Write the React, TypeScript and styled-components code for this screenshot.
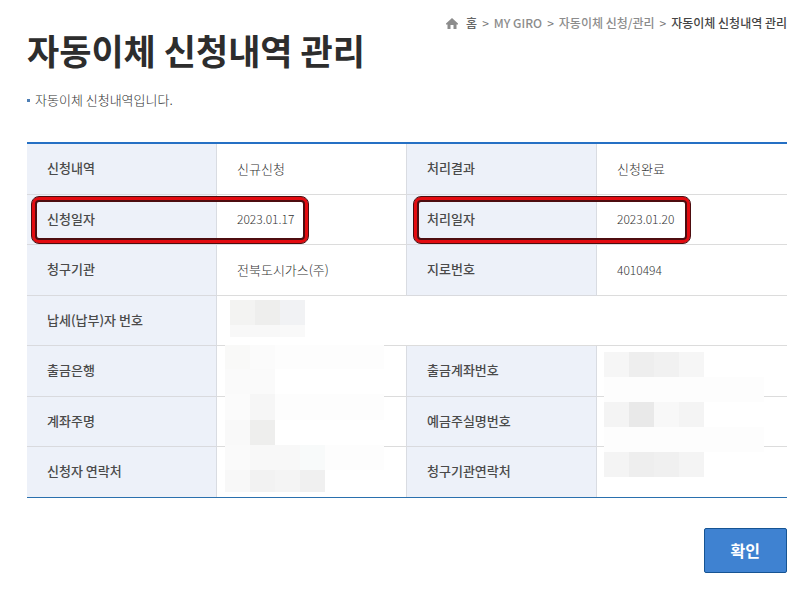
import React from "react";
import styled, { createGlobalStyle } from "styled-components";

const GlobalStyle = createGlobalStyle`
  * { box-sizing: border-box; }
  body {
    margin: 0;
    background: #fff;
    color: #333;
    font-family: "Noto Sans CJK KR", sans-serif;
    font-size: 13px;
    line-height: 20px;
  }
`;

const Page = styled.main`
  padding: 13px 13px 24px 27px;
`;

const Header = styled.header`
  display: flex;
  justify-content: space-between;
  align-items: flex-start;
`;

const Title = styled.h1`
  margin: 12px 0 0;
  color: #2d2d2d;
  font-size: 35px;
  font-weight: 700;
  line-height: 50px;
  white-space: nowrap;
`;

const Crumbs = styled.nav`
  display: flex;
  align-items: center;
  gap: 5px;
  color: #777;
  font-size: 12px;
  white-space: nowrap;
`;

const CrumbLink = styled.a<{ $home?: boolean }>`
  display: inline-flex;
  align-items: center;
  gap: 8px;
  color: ${(p) => (p.$home ? "#666" : "#8c8c8c")};
  font-weight: 500;
  text-decoration: none;
`;

const Current = styled.span`
  color: #444;
  font-weight: 500;
`;

const Intro = styled.p`
  display: flex;
  align-items: center;
  gap: 5px;
  margin: 15px 0 32px;
  font-weight: 300;
`;

const Bullet = styled.span`
  width: 3px;
  height: 3px;
  background: #4f7fb5;
`;

const Table = styled.table`
  width: 100%;
  table-layout: fixed;
  border-collapse: separate;
  border-spacing: 0;
  border-top: 2px solid #2570c4;
  border-bottom: 1px solid #2a70ae;
`;

const Row = styled.tr`
  height: 50px;
  &:nth-child(odd) { height: 51px; }
  &:last-child { height: 50px; }
  &:last-child > * { border-bottom: 0; }
`;

const Label = styled.th`
  position: relative;
  padding: 0 20px 2px;
  background: #edf1f9;
  border-right: 1px solid #d9dce2;
  border-bottom: 1px solid #d9dade;
  color: #4a4a4a;
  font-weight: 500;
  text-align: left;
`;

const Value = styled.td`
  position: relative;
  padding: 0 20px 1px;
  border-right: 1px solid #d9dce2;
  border-bottom: 1px solid #dcdcdc;
  font-weight: 300;
  &:last-child { border-right: 0; }
`;

const Digits = styled.span`
  font-size: 12px;
`;

const Highlight = styled.span<{ $left: number }>`
  position: absolute;
  z-index: 1;
  top: 1px;
  left: ${(p) => p.$left}px;
  width: 147%;
  height: 48px;
  border: 1px solid #4d0d10;
  border-radius: 8px;
  box-shadow: inset 0 0 0 3px #e30b10, inset 0 0 0 5px #4d0d10;
  pointer-events: none;
`;

const Mosaic = styled.span<{ $x: number; $y: number; $w: number }>`
  position: absolute;
  z-index: 1;
  top: ${(p) => p.$y}px;
  left: ${(p) => p.$x}px;
  width: ${(p) => p.$w}px;
  background: #fff;
`;

const TileRow = styled.span<{ $h: number; $rest: string }>`
  display: flex;
  height: ${(p) => p.$h}px;
  background: ${(p) => p.$rest};
`;

const Tile = styled.span<{ $tone: string }>`
  width: 25px;
  background: ${(p) => p.$tone};
`;

const Actions = styled.div`
  display: flex;
  justify-content: flex-end;
  margin-top: 30px;
`;

const Confirm = styled.button`
  padding: 9px 26px 10px;
  border: 1px solid #165493;
  border-radius: 2px;
  background: #3f82d1;
  color: #fff;
  font: 700 16px/24px "Noto Sans CJK KR", sans-serif;
  cursor: pointer;
`;

type Line = { h: number; tiles: string[]; rest?: string };

const payerTiles: Line[] = [
  { h: 25, tiles: ["#f3f3f2", "#eeeeed", "#f1f2f4"] },
  { h: 12, tiles: ["#f8f8f8", "#f8f8f8", "#f9f9f9"] },
];

const accountTiles: Line[] = [
  { h: 24, tiles: ["#f9f9f8", "#fbfbfb"], rest: "#fdfdfd" },
  { h: 25, tiles: ["#fafafa", "#fafafa"] },
  { h: 26, tiles: ["#fbfbfb", "#f6f6f6"], rest: "#fdfdfd" },
  { h: 25, tiles: ["#f9f9f9", "#eeeeed"] },
  { h: 25, tiles: ["#fafafa", "#f8f8f8", "#f8f8f8", "#f8fafa"], rest: "#fdfdfd" },
  { h: 22, tiles: ["#f8f8f8", "#f2f2f2", "#f4f4f4", "#f0f0f0"] },
];

const numberTiles: Line[] = [
  { h: 25, tiles: ["#f6f6f6", "#eeeeee", "#f1f1f1", "#f6f6f6"] },
  { h: 25, tiles: [], rest: "#fdfdfd" },
  { h: 25, tiles: ["#f4f4f4", "#e9e9e9", "#f8f8f8", "#f4f4f4"] },
  { h: 25, tiles: [], rest: "#fdfdfd" },
  { h: 25, tiles: ["#f4f4f4", "#eeeeee", "#f0f0f0", "#f4f4f4"] },
];

function Masked({ lines, x, y, w }: { lines: Line[]; x: number; y: number; w: number }) {
  return (
    <Mosaic $x={x} $y={y} $w={w} aria-hidden="true">
      {lines.map((line, i) => (
        <TileRow key={i} $h={line.h} $rest={line.rest ?? "#fff"}>
          {line.tiles.map((tone, j) => (
            <Tile key={j} $tone={tone} />
          ))}
        </TileRow>
      ))}
    </Mosaic>
  );
}

export default function App() {
  return (
    <>
      <GlobalStyle />
      <Page>
        <Header>
          <Title>자동이체 신청내역 관리</Title>
          <Crumbs>
            <CrumbLink href="#" $home>
              <svg width="12" height="11" viewBox="0 0 12 11" aria-hidden="true">
                <path d="M6 0 12 5.5V6.5h-1.5V11h-3V7h-3v4h-3V6.5H0v-1z" fill="#8c8c8c" />
              </svg>
              홈
            </CrumbLink>
            <span>&gt;</span>
            <CrumbLink href="#">MY GIRO</CrumbLink>
            <span>&gt;</span>
            <CrumbLink href="#">자동이체 신청/관리</CrumbLink>
            <span>&gt;</span>
            <Current>자동이체 신청내역 관리</Current>
          </Crumbs>
        </Header>
        <Intro>
          <Bullet />
          자동이체 신청내역입니다.
        </Intro>
        <Table>
          <tbody>
            <Row>
              <Label scope="row">신청내역</Label>
              <Value>신규신청</Value>
              <Label scope="row">처리결과</Label>
              <Value>신청완료</Value>
            </Row>
            <Row>
              <Label scope="row">신청일자<Highlight $left={4} /></Label>
              <Value><Digits>2023.01.17</Digits></Value>
              <Label scope="row">처리일자<Highlight $left={6} /></Label>
              <Value><Digits>2023.01.20</Digits></Value>
            </Row>
            <Row>
              <Label scope="row">청구기관</Label>
              <Value>전북도시가스(주)</Value>
              <Label scope="row">지로번호</Label>
              <Value><Digits>4010494</Digits></Value>
            </Row>
            <Row>
              <Label scope="row">납세(납부)자 번호</Label>
              <Value colSpan={3}><Masked lines={payerTiles} x={13} y={4} w={75} /></Value>
            </Row>
            <Row>
              <Label scope="row">출금은행</Label>
              <Value><Masked lines={accountTiles} x={8} y={-1} w={159} /></Value>
              <Label scope="row">출금계좌번호</Label>
              <Value><Masked lines={numberTiles} x={7} y={6} w={160} /></Value>
            </Row>
            <Row>
              <Label scope="row">계좌주명</Label>
              <Value />
              <Label scope="row">예금주실명번호</Label>
              <Value />
            </Row>
            <Row>
              <Label scope="row">신청자 연락처</Label>
              <Value />
              <Label scope="row">청구기관연락처</Label>
              <Value />
            </Row>
          </tbody>
        </Table>
        <Actions>
          <Confirm type="button">확인</Confirm>
        </Actions>
      </Page>
    </>
  );
}
